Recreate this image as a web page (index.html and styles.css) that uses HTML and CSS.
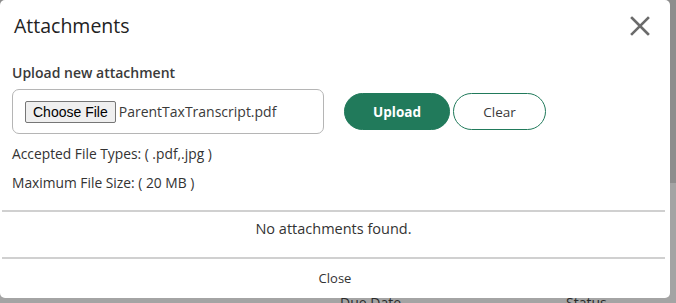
FILE: index.html
```html
<!DOCTYPE html>
<html lang="en">
<head>
  <meta charset="UTF-8" />
  <title>Attachments</title>
  <link rel="stylesheet" href="styles.css">
</head>
<body>
<div class="modal">
  <div class="modal-header">
    <h2>Attachments</h2>
    <span class="close-x">
      <svg width="20" height="20" viewBox="0 0 20 20"><path d="M2 2L18 18M18 2L2 18" stroke="#6b6b6b" stroke-width="2.6" stroke-linecap="square"/></svg>
    </span>
  </div>
  <div class="modal-body">
    <label class="upload-label">Upload new attachment</label>
    <div class="upload-row">
      <div class="file-box">
        <span class="file-btn">Choose File</span>
        <span class="file-name">ParentTaxTranscript.pdf</span>
      </div>
      <button class="btn btn-upload">Upload</button>
      <button class="btn btn-clear">Clear</button>
    </div>
    <p class="info">Accepted File Types: ( .pdf,.jpg )</p>
    <p class="info">Maximum File Size: ( 20 MB )</p>
  </div>
  <div class="empty">No attachments found.</div>
  <div class="modal-footer">Close</div>
</div>
<div class="behind">
  <span class="col col-date">Due Date</span>
  <span class="col col-status">Status</span>
</div>
</body>
</html>
```

FILE: styles.css
```css
* { box-sizing: border-box; }
body {
  margin: 0;
  font-family: 'Open Sans', sans-serif;
  background: linear-gradient(to bottom, #8d8d8d 0, #8d8d8d 183px, #a4a4a4 183px);
  color: #333;
  overflow: hidden;
}
.modal {
  width: 670px;
  height: 298px;
  background: #fff;
  border-radius: 5px;
  display: flex;
  flex-direction: column;
}
.modal-header {
  display: flex;
  justify-content: space-between;
  align-items: center;
  padding: 9px 20px 0 14px;
  height: 42px;
}
.modal-header h2 {
  margin: 0;
  font-size: 19.5px;
  font-weight: 400;
  line-height: 24px;
  color: #222;
}
.close-x {
  display: flex;
  margin-top: 1px;
}
.modal-body {
  padding: 21px 12px 0;
  height: 168px;
}
.upload-label {
  display: block;
  font-size: 14px;
  font-weight: 600;
  line-height: 20px;
  color: #3a3a3a;
}
.upload-row {
  display: flex;
  align-items: center;
  margin-top: 6px;
}
.file-box {
  width: 312px;
  height: 45px;
  border: 1px solid #b5b5b5;
  border-radius: 7px;
  display: flex;
  align-items: center;
  padding-left: 12px;
}
.file-btn {
  font-family: 'Liberation Sans', Arial, sans-serif;
  font-size: 14px;
  color: #000;
  background: #efefef;
  border: 1px solid #767676;
  border-radius: 2px;
  height: 22px;
  line-height: 20px;
  padding: 0 7px;
}
.file-name {
  margin-left: 3px;
  font-size: 14px;
  color: #3a3a3a;
}
.btn {
  font-family: 'Open Sans', sans-serif;
  font-size: 13.5px;
  height: 37px;
  border-radius: 19px;
  cursor: pointer;
}
.btn-upload {
  margin-left: 20px;
  width: 106px;
  background: #217a5b;
  border: 1px solid #217a5b;
  color: #fff;
  font-weight: 700;
}
.btn-clear {
  margin-left: 3px;
  width: 93px;
  background: #fff;
  border: 1px solid #217a5b;
  color: #3a3a3a;
}
.info {
  margin: 0;
  font-size: 13.8px;
  line-height: 20px;
  color: #333;
}
.info:first-of-type { margin-top: 10px; }
.info + .info { margin-top: 9px; }
.empty {
  margin: 0 5px 0 2px;
  border-top: 2px solid #d0d0d0;
  border-bottom: 2px solid #d0d0d0;
  height: 49px;
  text-align: center;
  font-size: 14.5px;
  line-height: 34px;
  color: #333;
}
.modal-footer {
  text-align: center;
  font-size: 13px;
  line-height: 38px;
  color: #333;
}
.behind {
  position: relative;
  height: 5px;
  font-size: 14px;
  color: #2a2a2a;
}
.col {
  position: absolute;
  top: -3px;
  line-height: 16px;
}
.col-date { left: 340px; }
.col-status { left: 566px; }
```
